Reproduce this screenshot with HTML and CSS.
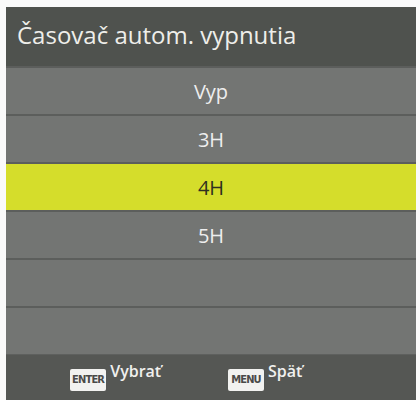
FILE: index.html
```html
<!DOCTYPE html>
<html>
<head>
<meta charset="utf-8">
<link rel="stylesheet" href="styles.css">
</head>
<body>
<div class="panel">
  <div class="header">Časovač autom. vypnutia</div>
  <div class="list">
    <div class="row">Vyp</div>
    <div class="row">3H</div>
    <div class="row selected">4H</div>
    <div class="row">5H</div>
    <div class="row"></div>
    <div class="row"></div>
  </div>
  <div class="footer">
    <div class="hint"><span class="key">ENTER</span><span class="label">Vybrať</span></div>
    <div class="hint"><span class="key">MENU</span><span class="label">Späť</span></div>
  </div>
</div>
</body>
</html>
```
FILE: styles.css
```css
html, body {
  margin: 0;
  padding: 0;
  background: #fafafa;
}
body {
  padding: 7px 4px 0 6px;
  height: 400px;
  box-sizing: border-box;
  overflow: hidden;
  font-family: "Open Sans", "Noto Sans", sans-serif;
}
.panel {
  width: 410px;
  height: 393px;
  display: flex;
  flex-direction: column;
  background: #5e605e;
}
.header {
  height: 59px;
  background: #4f524e;
  color: #eeeeea;
  font-size: 24px;
  display: flex;
  align-items: center;
  padding-left: 11px;
  padding-bottom: 4px;
  box-sizing: border-box;
}
.list {
  display: flex;
  flex-direction: column;
  gap: 2px;
  padding-top: 2px;
  background: #5c5e5c;
}
.row {
  height: 46px;
  background: #737573;
  color: #eeeeee;
  font-size: 20px;
  font-weight: 500;
  display: flex;
  align-items: center;
  justify-content: center;
}
.row.selected {
  background: #d5dd2b;
  color: #2e3020;
}
.footer {
  flex: 1;
  margin-top: 1px;
  background: #555754;
  display: flex;
  align-items: flex-start;
  padding-top: 6px;
  box-sizing: border-box;
}
.hint {
  display: flex;
  align-items: flex-start;
  gap: 4px;
}
.hint:first-child {
  margin-left: 64px;
  width: 158px;
}
.key {
  margin-top: 8px;
  background: #f2f2f0;
  color: #4a4a48;
  font-family: "DejaVu Sans Condensed", "Liberation Sans Narrow", sans-serif;
  font-weight: bold;
  font-size: 11px;
  letter-spacing: -0.8px;
  height: 22px;
  line-height: 22px;
  padding: 0 2px;
  border-radius: 2px;
  min-width: 32px;
  text-align: center;
}
.label {
  color: #f0f0ee;
  font-size: 16px;
  font-weight: 600;
  line-height: 20px;
}
```
